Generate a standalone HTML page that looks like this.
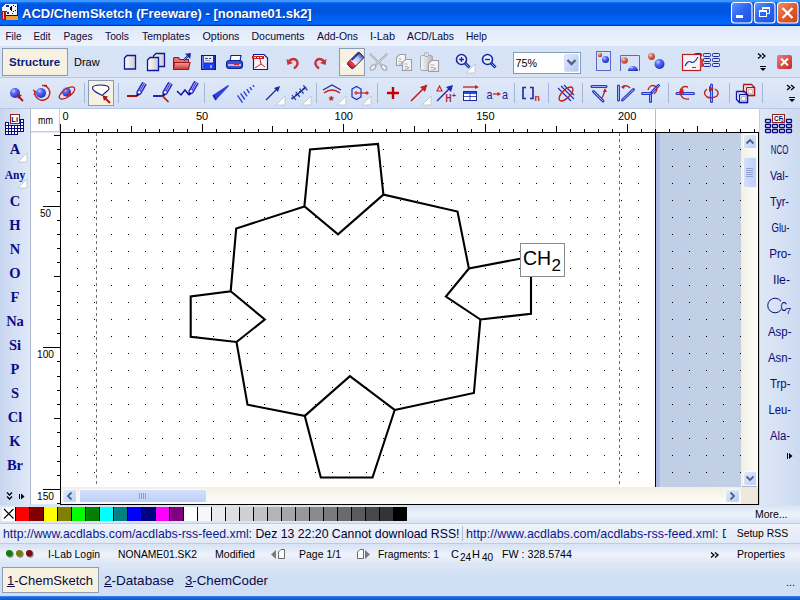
<!DOCTYPE html>
<html><head><meta charset="utf-8"><title>ACD/ChemSketch</title>
<style>html,body{margin:0;padding:0;width:800px;height:600px;overflow:hidden;background:#dfe8f6}</style>
</head><body>
<svg width="800" height="600" viewBox="0 0 800 600" style="position:absolute;left:0;top:0;font-family:'Liberation Sans', sans-serif">
<defs>
<linearGradient id="gTitle" x1="0" y1="0" x2="0" y2="1">
 <stop offset="0" stop-color="#3f97ff"/><stop offset="0.07" stop-color="#3f97ff"/>
 <stop offset="0.1" stop-color="#0a6cf2"/><stop offset="0.16" stop-color="#0058e4"/>
 <stop offset="0.45" stop-color="#0054dc"/><stop offset="0.8" stop-color="#0064fa"/>
 <stop offset="0.93" stop-color="#0066ff"/><stop offset="0.96" stop-color="#0040c4"/>
 <stop offset="1" stop-color="#0036b0"/>
</linearGradient>
<linearGradient id="gMenu" x1="0" y1="0" x2="0" y2="1">
 <stop offset="0" stop-color="#dce7f8"/><stop offset="0.5" stop-color="#e6eefa"/><stop offset="1" stop-color="#eef4fc"/>
</linearGradient>
<linearGradient id="gTb" x1="0" y1="0" x2="0" y2="1">
 <stop offset="0" stop-color="#d7e3f6"/><stop offset="0.5" stop-color="#d6e2f5"/><stop offset="1" stop-color="#d8e3f5"/>
</linearGradient>
<linearGradient id="gTb2" x1="0" y1="0" x2="0" y2="1">
 <stop offset="0" stop-color="#dee8f8"/><stop offset="0.5" stop-color="#d9e4f6"/><stop offset="1" stop-color="#d3dff4"/>
</linearGradient>
<linearGradient id="gLP" x1="0" y1="0" x2="1" y2="0">
 <stop offset="0" stop-color="#c7d6f0"/><stop offset="1" stop-color="#e0e9f8"/>
</linearGradient>
<linearGradient id="gRP" x1="0" y1="0" x2="1" y2="0">
 <stop offset="0" stop-color="#dfe8f7"/><stop offset="1" stop-color="#ccdaf1"/>
</linearGradient>
<linearGradient id="gRow" x1="0" y1="0" x2="0" y2="1">
 <stop offset="0" stop-color="#d6e1f3"/><stop offset="0.5" stop-color="#eef3fb"/><stop offset="1" stop-color="#d9e4f5"/>
</linearGradient>
<linearGradient id="gRss" x1="0" y1="0" x2="0" y2="1">
 <stop offset="0" stop-color="#eef3fb"/><stop offset="1" stop-color="#e2e9f6"/>
</linearGradient>
<linearGradient id="gTabs" x1="0" y1="0" x2="0" y2="1">
 <stop offset="0" stop-color="#dce7f7"/><stop offset="0.3" stop-color="#d2e0f4"/><stop offset="1" stop-color="#d0def3"/>
</linearGradient>
<linearGradient id="gBot" x1="0" y1="0" x2="0" y2="1">
 <stop offset="0" stop-color="#3c8af0"/><stop offset="0.4" stop-color="#1a66dc"/><stop offset="1" stop-color="#0d58d0"/>
</linearGradient>
<linearGradient id="gTrackV" x1="0" y1="0" x2="1" y2="0">
 <stop offset="0" stop-color="#f2f0e4"/><stop offset="1" stop-color="#fdfdf9"/>
</linearGradient>
<linearGradient id="gTrackH" x1="0" y1="0" x2="0" y2="1">
 <stop offset="0" stop-color="#f2f0e4"/><stop offset="1" stop-color="#fdfdf9"/>
</linearGradient>
<linearGradient id="gSbBtn" x1="0" y1="0" x2="1" y2="1">
 <stop offset="0" stop-color="#e4ecfd"/><stop offset="1" stop-color="#b9cdf6"/>
</linearGradient>
<linearGradient id="gThumbH" x1="0" y1="0" x2="0" y2="1">
 <stop offset="0" stop-color="#d3e0fc"/><stop offset="1" stop-color="#bcd0f8"/>
</linearGradient>
<linearGradient id="gThumbV" x1="0" y1="0" x2="1" y2="0">
 <stop offset="0" stop-color="#d3e0fc"/><stop offset="1" stop-color="#bcd0f8"/>
</linearGradient>
<radialGradient id="gBlue" cx="0.35" cy="0.3" r="0.75">
 <stop offset="0" stop-color="#c8d0ff"/><stop offset="0.35" stop-color="#5b6cf5"/><stop offset="1" stop-color="#1a2ac0"/>
</radialGradient>
<radialGradient id="gRed" cx="0.35" cy="0.3" r="0.75">
 <stop offset="0" stop-color="#ffd0c8"/><stop offset="0.4" stop-color="#e07060"/><stop offset="1" stop-color="#b03020"/>
</radialGradient>
<linearGradient id="gDoc" x1="0" y1="0" x2="1" y2="0">
 <stop offset="0" stop-color="#ffffff"/><stop offset="1" stop-color="#c8c8d0"/>
</linearGradient>
<linearGradient id="gFolder" x1="0" y1="0" x2="0" y2="1">
 <stop offset="0" stop-color="#f4a0a0"/><stop offset="1" stop-color="#d03030"/>
</linearGradient>
<linearGradient id="gClose" x1="0" y1="0" x2="1" y2="1">
 <stop offset="0" stop-color="#f07a7a"/><stop offset="1" stop-color="#c02828"/>
</linearGradient>
<linearGradient id="gXPbtn" x1="0" y1="0" x2="1" y2="1">
 <stop offset="0" stop-color="#5e92ff"/><stop offset="0.5" stop-color="#2a64f0"/><stop offset="1" stop-color="#1a54e0"/>
</linearGradient>
<linearGradient id="gXPclose" x1="0" y1="0" x2="1" y2="1">
 <stop offset="0" stop-color="#f0906c"/><stop offset="0.5" stop-color="#e05a30"/><stop offset="1" stop-color="#c84418"/>
</linearGradient>
<linearGradient id="gCombo" x1="0" y1="0" x2="1" y2="1">
 <stop offset="0" stop-color="#dfe8fd"/><stop offset="1" stop-color="#b4c8f4"/>
</linearGradient>
<linearGradient id="gOff" x1="0" y1="0" x2="1" y2="0">
 <stop offset="0" stop-color="#a9b9e2"/><stop offset="0.04" stop-color="#a9b9e2"/><stop offset="0.045" stop-color="#c0cfe5"/><stop offset="1" stop-color="#c2d0e6"/>
</linearGradient>
</defs>
<rect x="0" y="0" width="800" height="26" fill="url(#gTitle)"/><g shape-rendering="crispEdges"><path d="M5 4 L18 4 L18 16 L2 16 L2 7 Z" fill="#f4f6fb"/><rect x="17" y="4" width="1" height="12" fill="#0a1a60"/><rect x="2" y="15" width="16" height="1" fill="#101838"/><rect x="6" y="16" width="12" height="4" fill="#f0a030"/><rect x="2" y="11" width="4" height="9" fill="#b01810"/><rect x="3" y="12" width="1" height="7" fill="#f0c0b0"/><rect x="6" y="5" width="3" height="2" fill="#1a2a9a"/><rect x="13" y="5" width="1" height="1" fill="#000"/><rect x="15" y="6" width="1" height="1" fill="#000"/><rect x="10" y="7" width="2" height="3" fill="#000"/><rect x="11" y="6" width="1" height="1" fill="#000"/><rect x="11" y="10" width="1" height="1" fill="#000"/><rect x="15" y="10" width="1" height="1" fill="#000"/><rect x="13" y="11" width="1" height="1" fill="#000"/><rect x="12" y="13" width="1" height="1" fill="#1a2a9a"/><rect x="7" y="12" width="2" height="2" fill="#1a2a9a"/><rect x="6" y="11" width="1" height="1" fill="#1a2a9a"/></g><text x="23" y="19" font-size="13" font-weight="bold" fill="#0a1e70" opacity="0.6">ACD/ChemSketch (Freeware) - [noname01.sk2]</text><text x="22" y="18" font-size="13" font-weight="bold" fill="#fff">ACD/ChemSketch (Freeware) - [noname01.sk2]</text><rect x="731.5" y="2.5" width="20.5" height="20.5" rx="3" fill="url(#gXPbtn)" stroke="#fff" stroke-width="1.1"/><rect x="754.5" y="2.5" width="20.5" height="20.5" rx="3" fill="url(#gXPbtn)" stroke="#fff" stroke-width="1.1"/><rect x="777.5" y="2.5" width="20.5" height="20.5" rx="3" fill="url(#gXPclose)" stroke="#fff" stroke-width="1.1"/><rect x="736" y="15" width="7" height="3" fill="#fff"/><path d="M762.5 10 L762.5 7.5 L769.5 7.5 L769.5 13.5 L767 13.5" fill="none" stroke="#fff" stroke-width="1"/><rect x="759.5" y="10.5" width="7" height="6" fill="none" stroke="#fff" stroke-width="1"/><rect x="759" y="10" width="8" height="2" fill="#fff"/><rect x="762" y="7" width="8" height="2" fill="#fff"/><path d="M782.5 8 L792.5 18 M792.5 8 L782.5 18" stroke="#fff" stroke-width="2.2"/><rect x="0" y="26" width="800" height="20" fill="url(#gMenu)"/><rect x="0" y="26" width="800" height="1" fill="#d6eafd"/><text x="5.5" y="40" font-size="11" fill="#0a0a40" textLength="16" lengthAdjust="spacingAndGlyphs">File</text><text x="33.5" y="40" font-size="11" fill="#0a0a40" textLength="17" lengthAdjust="spacingAndGlyphs">Edit</text><text x="63.5" y="40" font-size="11" fill="#0a0a40" textLength="29" lengthAdjust="spacingAndGlyphs">Pages</text><text x="105" y="40" font-size="11" fill="#0a0a40" textLength="24" lengthAdjust="spacingAndGlyphs">Tools</text><text x="142" y="40" font-size="11" fill="#0a0a40" textLength="48" lengthAdjust="spacingAndGlyphs">Templates</text><text x="202.5" y="40" font-size="11" fill="#0a0a40" textLength="37" lengthAdjust="spacingAndGlyphs">Options</text><text x="251.5" y="40" font-size="11" fill="#0a0a40" textLength="53" lengthAdjust="spacingAndGlyphs">Documents</text><text x="317" y="40" font-size="11" fill="#0a0a40" textLength="41" lengthAdjust="spacingAndGlyphs">Add-Ons</text><text x="370" y="40" font-size="11" fill="#0a0a40" textLength="25" lengthAdjust="spacingAndGlyphs">I-Lab</text><text x="407" y="40" font-size="11" fill="#0a0a40" textLength="47" lengthAdjust="spacingAndGlyphs">ACD/Labs</text><text x="466" y="40" font-size="11" fill="#0a0a40" textLength="21" lengthAdjust="spacingAndGlyphs">Help</text><rect x="0" y="46" width="800" height="31" fill="url(#gTb)"/><rect x="0" y="77" width="800" height="1" fill="#b8c7e3"/><rect x="0" y="78" width="800" height="30" fill="url(#gTb2)"/><rect x="0" y="108" width="800" height="1" fill="#b8c7e3"/><rect x="2.5" y="48.5" width="65" height="27" fill="#f6f1e0" stroke="#8b9bb4"/><text x="9" y="66" font-size="11.5" font-weight="bold" fill="#0a1e80">Structure</text><text x="74" y="66" font-size="11" fill="#000">Draw</text><path d="M127.0 55.5 L135.5 55.5 L135.5 69.0 L124.5 69.0 L124.5 58.0 Z" fill="url(#gDoc)" stroke="#0a1a9a" stroke-width="1.3"/><path d="M156.0 53.5 L164.5 53.5 L164.5 66.5 L153.5 66.5 L153.5 56.0 Z" fill="url(#gDoc)" stroke="#0a1a9a" stroke-width="1.3"/><path d="M150.0 57.5 L158.5 57.5 L158.5 70.5 L147.5 70.5 L147.5 60.0 Z" fill="url(#gDoc)" stroke="#0a1a9a" stroke-width="1.3"/><path d="M173.5 69.5 L173.5 58.5 Q173.5 57.5 174.5 57.5 L178.5 57.5 L180 59.5 L188.5 59.5 L188.5 69.5 Z" fill="#e87070" stroke="#a01818" stroke-width="1.1"/><path d="M173.5 69.5 L174.5 62.5 L190 62.5 L188.5 69.5 Z" fill="url(#gFolder)" stroke="#a01818" stroke-width="1.1"/><path d="M183.5 60.5 L188.5 55.5" stroke="#1a2a9a" stroke-width="2.2"/><path d="M183.5 60.5 L188.5 55.5" stroke="#8ab0ff" stroke-width="0.8"/><path d="M191 53 L185 53.8 L190.2 59 Z" fill="#1a2a9a"/><rect x="201.5" y="55.5" width="14" height="14" fill="#2030c0" stroke="#0a1890" stroke-width="1"/><rect x="202" y="56" width="1.5" height="13" fill="#5a78f0"/><rect x="204" y="56" width="9" height="6.5" fill="#e8e8f0"/><rect x="205" y="58" width="3" height="1" fill="#404880"/><rect x="209" y="58" width="2" height="1" fill="#404880"/><rect x="205" y="60" width="5" height="1" fill="#9098c0"/><rect x="204.5" y="64" width="9" height="5.5" fill="#1a40ff"/><rect x="210" y="65" width="2" height="3" fill="#8ab0ff"/><path d="M230 61 L231 55.5 L241 55.5 L240 61 Z" fill="#fff" stroke="#0a1e9a" stroke-width="1.1"/><rect x="226.5" y="60.5" width="16" height="8" rx="3" fill="#3a50d8" stroke="#0a1e9a" stroke-width="1.1"/><rect x="228" y="64" width="13" height="2" fill="#b0b8e0"/><rect x="234" y="64" width="5" height="1" fill="#d02020"/><path d="M253.5 54.5 L264 54.5 L267.5 58 L267.5 69.5 L253.5 69.5 Z" fill="#f4f4f8" stroke="#0a1e9a" stroke-width="1.2"/><rect x="252" y="56" width="12" height="3" fill="#c82020"/><rect x="254" y="57" width="2" height="1" fill="#fff"/><rect x="257" y="57" width="2" height="1" fill="#fff"/><rect x="260" y="57" width="2" height="1" fill="#fff"/><path d="M260 59 L261 64 L265 67 M261 64 L255 68" stroke="#c82020" stroke-width="1" fill="none"/><path d="M289 61 Q294 57 297 61 Q299 65 294 68.5" stroke="#c8303a" stroke-width="2.3" fill="none"/><path d="M286.5 59 L287.5 65 L293 63 Z" fill="#c8303a"/><path d="M324 61 Q319 57 316 61 Q314 65 319 68.5" stroke="#c8303a" stroke-width="2.3" fill="none"/><path d="M326.5 59 L325.5 65 L320 63 Z" fill="#c8303a"/><rect x="339.5" y="48.5" width="25" height="27" fill="#f6f1e0" stroke="#8b9bb4"/><rect x="342" y="63" width="10" height="4" fill="#fff"/><defs><linearGradient id="gEr" x1="0" y1="0" x2="1" y2="0"><stop offset="0" stop-color="#c81818"/><stop offset="0.3" stop-color="#e85050"/><stop offset="0.32" stop-color="#f0f0f8"/><stop offset="0.7" stop-color="#c0c8e8"/><stop offset="1" stop-color="#404890"/></linearGradient></defs><g transform="rotate(-45 355.5 60.5)"><rect x="347" y="56.5" width="17" height="8" rx="2" fill="url(#gEr)" stroke="#1a1a80" stroke-width="0.9"/><rect x="353" y="56.5" width="11" height="2" fill="#2a3aa0"/></g><path d="M370.5 54.5 L382 65.5 M386.5 54.5 L375 65.5" stroke="#a0a4ac" stroke-width="2.2" stroke-linecap="round"/><path d="M370.5 54.5 L382 65.5 M386.5 54.5 L375 65.5" stroke="#f0f0f0" stroke-width="0.8"/><ellipse cx="373" cy="67.5" rx="3.2" ry="2" transform="rotate(-40 373 67.5)" fill="#f4f4f4" stroke="#a0a4ac" stroke-width="1.1"/><ellipse cx="384" cy="67.5" rx="3.2" ry="2" transform="rotate(40 384 67.5)" fill="#f4f4f4" stroke="#a0a4ac" stroke-width="1.1"/><path d="M399.5 54.5 L405.5 54.5 L405.5 65.5 L396.5 65.5 L396.5 57.5 Z" fill="#f6f6f6" stroke="#9a9ea6" stroke-width="1.1"/><rect x="398.5" y="58.5" width="3" height="1" fill="#a8acb4"/><rect x="398.5" y="61.0" width="3" height="1" fill="#a8acb4"/><rect x="398.5" y="63.5" width="3" height="1" fill="#a8acb4"/><path d="M400.5 61.5 l3 3 m0 -3 l-3 3" stroke="#a8acb4" stroke-width="0.9"/><path d="M405.5 59.5 L411.5 59.5 L411.5 70.5 L402.5 70.5 L402.5 62.5 Z" fill="#f6f6f6" stroke="#9a9ea6" stroke-width="1.1"/><rect x="404.5" y="63.5" width="3" height="1" fill="#a8acb4"/><rect x="404.5" y="66.0" width="3" height="1" fill="#a8acb4"/><rect x="404.5" y="68.5" width="3" height="1" fill="#a8acb4"/><path d="M406.5 66.5 l3 3 m0 -3 l-3 3" stroke="#a8acb4" stroke-width="0.9"/><defs><linearGradient id="gPaste" x1="0" y1="0" x2="1" y2="0"><stop offset="0" stop-color="#f8f8f8"/><stop offset="1" stop-color="#b8b8b8"/></linearGradient></defs><rect x="420.5" y="55.5" width="12" height="15" rx="2" fill="url(#gPaste)" stroke="#a0a4ac"/><rect x="424.5" y="52.5" width="4" height="4" rx="1" fill="#e0e0e0" stroke="#a0a4ac" stroke-width="0.8"/><path d="M431.5 60.5 L438.5 60.5 L438.5 71.5 L428.5 71.5 L428.5 63.5 Z" fill="#f6f6f6" stroke="#9a9ea6" stroke-width="1.1"/><rect x="430.5" y="64.5" width="4" height="1" fill="#a8acb4"/><rect x="430.5" y="67.0" width="4" height="1" fill="#a8acb4"/><rect x="430.5" y="69.5" width="4" height="1" fill="#a8acb4"/><path d="M433.5 67.5 l3 3 m0 -3 l-3 3" stroke="#a8acb4" stroke-width="0.9"/><circle cx="461.5" cy="59.5" r="5" fill="#e8f0ff" stroke="#1a2aa0" stroke-width="1.6"/><path d="M459 59.5 L464 59.5 M461.5 57 L461.5 62" stroke="#1a2aa0" stroke-width="1.4"/><path d="M465 63 L469.5 67.5" stroke="#1a2aa0" stroke-width="3"/><path d="M465.5 63.5 L469 67" stroke="#7ab0ff" stroke-width="1"/><path d="M466 73 L475 64 L475 73 Z" fill="#fff" stroke="#b8c0cc" stroke-width="0.8"/><circle cx="487.5" cy="59.5" r="5" fill="#e8f0ff" stroke="#1a2aa0" stroke-width="1.6"/><path d="M485 59.5 L490 59.5" stroke="#1a2aa0" stroke-width="1.4"/><path d="M491 63 L495.5 67.5" stroke="#1a2aa0" stroke-width="3"/><path d="M491.5 63.5 L495 67" stroke="#7ab0ff" stroke-width="1"/><rect x="513.5" y="52.5" width="67" height="21" fill="#fff" stroke="#7f9db9"/><text x="515.5" y="66.5" font-size="11.5" fill="#000" textLength="21.5" lengthAdjust="spacingAndGlyphs">75%</text><rect x="564.5" y="54.5" width="14" height="17" rx="1.5" fill="url(#gCombo)" stroke="#c4d4f6" stroke-width="0.6"/><path d="M567.5 60 L571.5 64 L575.5 60" stroke="#4d6185" stroke-width="2.3" fill="none"/><rect x="596.5" y="51.5" width="14" height="19" fill="none" stroke="#5a68c8"/><circle cx="600" cy="55" r="2.2" fill="url(#gRed)"/><circle cx="605.5" cy="59.5" r="3.5" fill="url(#gBlue)"/><path d="M620.5 71 L620.5 55.5 L639.5 55.5 L639.5 71" fill="none" stroke="#5a68c8"/><circle cx="624.5" cy="60.5" r="3.3" fill="url(#gRed)"/><path d="M628 71 A5 5 0 0 1 638 71 Z" fill="url(#gBlue)"/><circle cx="651.5" cy="56.5" r="3.4" fill="url(#gRed)"/><circle cx="659.5" cy="64" r="5" fill="url(#gBlue)"/><rect x="694.5" y="53.5" width="7" height="3" rx="0.8" fill="none" stroke="#1a2aa0" stroke-width="1"/><rect x="703.5" y="53.5" width="7" height="3" rx="0.8" fill="none" stroke="#1a2aa0" stroke-width="1"/><rect x="712.5" y="53.5" width="7" height="3" rx="0.8" fill="none" stroke="#1a2aa0" stroke-width="1"/><rect x="694.5" y="58.5" width="7" height="3" rx="0.8" fill="none" stroke="#1a2aa0" stroke-width="1"/><rect x="703.5" y="58.5" width="7" height="3" rx="0.8" fill="none" stroke="#1a2aa0" stroke-width="1"/><rect x="712.5" y="58.5" width="7" height="3" rx="0.8" fill="none" stroke="#1a2aa0" stroke-width="1"/><rect x="694.5" y="63.5" width="7" height="3" rx="0.8" fill="none" stroke="#1a2aa0" stroke-width="1"/><rect x="703.5" y="63.5" width="7" height="3" rx="0.8" fill="none" stroke="#1a2aa0" stroke-width="1"/><rect x="712.5" y="63.5" width="7" height="3" rx="0.8" fill="none" stroke="#1a2aa0" stroke-width="1"/><rect x="682.5" y="54.5" width="18" height="16" fill="#f4f4fa" stroke="#b82020" stroke-width="1.2"/><rect x="700" y="59" width="3" height="8" fill="#d04040"/><path d="M685 66 Q688 60 691 62 Q694 64 698 57" stroke="#1a2aa0" stroke-width="1.1" fill="none"/><rect x="692" y="67" width="4" height="1" fill="#c02020"/><path d="M758 53.5 L761 56.0 L758 58.5 M762 53.5 L765 56.0 L762 58.5" stroke="#000" stroke-width="1.3" fill="none"/><rect x="760" y="66" width="6" height="1" fill="#000"/><path d="M760 68 L766 68 L763 71 Z" fill="#000"/><rect x="777" y="55" width="15" height="14" rx="2" fill="url(#gClose)"/><path d="M781 58.5 L788 65.5 M788 58.5 L781 65.5" stroke="#fff" stroke-width="2"/><circle cx="15" cy="93" r="5" fill="url(#gBlue)"/><path d="M18 96 L23 101" stroke="#b01818" stroke-width="2"/><path d="M17 94 L22 95 L18 99 Z" fill="#b01818"/><circle cx="41" cy="93" r="5" fill="url(#gBlue)"/><path d="M35 91 A7.5 7.5 0 1 0 44 85.5" stroke="#c02020" stroke-width="1.4" fill="none"/><path d="M42 85.5 L47 85.5" stroke="#c02020" stroke-width="1.4"/><path d="M33 90 L35.5 91.5 L34 95" stroke="#c02020" stroke-width="1.2" fill="none"/><circle cx="66.5" cy="92" r="4.5" fill="url(#gBlue)"/><ellipse cx="67" cy="93" rx="9" ry="4" transform="rotate(-35 67 93)" fill="none" stroke="#c02020" stroke-width="1.3"/><path d="M66 97 L70 91 L72 95 Z" fill="#c02020"/><rect x="84" y="83" width="1" height="20" fill="#a6b6d6"/><rect x="88.5" y="80.5" width="25" height="25" fill="#f6f1e0" stroke="#8b9bb4"/><path d="M102.5 95.5 C97 93 92.5 91 92.5 88 C92.5 85.5 96 85 100.5 85 C105 85 109 86 109 88.5 C109 91 105 91.5 102.5 95.5" stroke="#0a1a90" stroke-width="1.1" fill="#fff"/><path d="M104 97 L110 103" stroke="#b01818" stroke-width="2"/><path d="M102.5 95.5 L108 96.5 L104 101 Z" fill="#b01818"/><rect x="118" y="83" width="1" height="20" fill="#a6b6d6"/><path d="M127 96 L137 96" stroke="#a81010" stroke-width="2"/><path d="M137 96 L140.75 94.14 L146.30 84.63 L142.32 82.31 L136.78 91.82 Z" fill="#2a2ad8" stroke="#0a0a90" stroke-width="0.6"/><path d="M139.33 90.41 L143.62 83.07" stroke="#e8ecff" stroke-width="0.7"/><path d="M140.72 91.22 L145.00 83.88" stroke="#e8ecff" stroke-width="0.7"/><circle cx="139.17" cy="92.28" r="1.3" fill="#fff"/><path d="M137 96 L138.01 94.27" stroke="#0a0a70" stroke-width="1.6"/><path d="M153 96 L162.5 96" stroke="#1010b0" stroke-width="1.8"/><path d="M162.5 96 L168.5 102" stroke="#a81010" stroke-width="1.6"/><path d="M163 96 L166.75 94.14 L172.30 84.63 L168.32 82.31 L162.78 91.82 Z" fill="#2a2ad8" stroke="#0a0a90" stroke-width="0.6"/><path d="M165.33 90.41 L169.62 83.07" stroke="#e8ecff" stroke-width="0.7"/><path d="M166.72 91.22 L171.00 83.88" stroke="#e8ecff" stroke-width="0.7"/><circle cx="165.17" cy="92.28" r="1.3" fill="#fff"/><path d="M163 96 L164.01 94.27" stroke="#0a0a70" stroke-width="1.6"/><path d="M177 91 L181 95 L185 90 L189 95" stroke="#1010b0" stroke-width="1.5" fill="none"/><path d="M189 95 L192.75 93.14 L198.30 83.63 L194.32 81.31 L188.78 90.82 Z" fill="#2a2ad8" stroke="#0a0a90" stroke-width="0.6"/><path d="M191.33 89.41 L195.62 82.07" stroke="#e8ecff" stroke-width="0.7"/><path d="M192.72 90.22 L197.00 82.88" stroke="#e8ecff" stroke-width="0.7"/><circle cx="191.17" cy="91.28" r="1.3" fill="#fff"/><path d="M189 95 L190.01 93.27" stroke="#0a0a70" stroke-width="1.6"/><rect x="204" y="83" width="1" height="20" fill="#a6b6d6"/><path d="M213 95 L228 85 L229 86 L216 100 Z" fill="#3040e0"/><path d="M213 95 L216 100" stroke="#1a20a0" stroke-width="1.5"/><path d="M237.5 95.3 L242.5 102.7" stroke="#3040d8" stroke-width="1.4"/><path d="M240.6 93.3 L244.8 99.5" stroke="#3040d8" stroke-width="1.4"/><path d="M243.7 91.3 L247.1 96.3" stroke="#3040d8" stroke-width="1.4"/><path d="M246.8 89.2 L249.4 93.2" stroke="#3040d8" stroke-width="1.4"/><path d="M249.9 87.2 L251.7 90.0" stroke="#3040d8" stroke-width="1.4"/><path d="M252.9 85.2 L254.1 86.8" stroke="#3040d8" stroke-width="1.4"/><path d="M266 100 L277 89" stroke="#1a2aa0" stroke-width="1.3"/><path d="M280 86 L274 88 L278 92 Z" fill="#1a2aa0"/><path d="M276 105 L285 96 L285 105 Z" fill="#fff" stroke="#b8c0cc" stroke-width="0.8"/><path d="M292 99 L306 87" stroke="#1a2aa0" stroke-width="1.3"/><path d="M292.0 95.0 L296.0 100.0" stroke="#1a2aa0" stroke-width="1.2"/><circle cx="292.2" cy="98.3" r="1" fill="#1a2aa0"/><path d="M295.8 91.8 L299.8 96.8" stroke="#1a2aa0" stroke-width="1.2"/><circle cx="296.0" cy="95.1" r="1" fill="#1a2aa0"/><path d="M299.6 88.6 L303.6 93.6" stroke="#1a2aa0" stroke-width="1.2"/><circle cx="299.8" cy="91.9" r="1" fill="#1a2aa0"/><path d="M303.4 85.4 L307.4 90.4" stroke="#1a2aa0" stroke-width="1.2"/><circle cx="303.6" cy="88.7" r="1" fill="#1a2aa0"/><path d="M302 105 L311 96 L311 105 Z" fill="#fff" stroke="#b8c0cc" stroke-width="0.8"/><rect x="316" y="83" width="1" height="20" fill="#a6b6d6"/><path d="M323 90 L332 85 L341 90" stroke="#1a2aa0" stroke-width="1.2" fill="none"/><path d="M324 93 Q332 87 340 93" stroke="#c02020" stroke-width="1.3" fill="none"/><text x="328.8" y="105" font-size="13" font-weight="bold" fill="#c02020">*</text><path d="M337 105 L346 96 L346 105 Z" fill="#fff" stroke="#b8c0cc" stroke-width="0.8"/><path d="M352 89 L356.5 86.5 L361 89 L361 97 L356.5 99.5 L352 97 Z" fill="none" stroke="#1a2ac0" stroke-width="1.2"/><path d="M356 93 L368 93" stroke="#c02020" stroke-width="1.2"/><circle cx="356" cy="93" r="1.2" fill="none" stroke="#c02020"/><circle cx="367" cy="93" r="1.2" fill="none" stroke="#c02020"/><path d="M362 105 L371 96 L371 105 Z" fill="#fff" stroke="#b8c0cc" stroke-width="0.8"/><rect x="377" y="83" width="1" height="20" fill="#a6b6d6"/><path d="M387 93 L399 93 M393 87 L393 99" stroke="#c00000" stroke-width="2.4"/><path d="M411 101 L424 88" stroke="#c02020" stroke-width="1.6"/><path d="M427.5 84.5 L420 87 L425 92 Z" fill="#c02020"/><path d="M422 105 L431 96 L431 105 Z" fill="#fff" stroke="#b8c0cc" stroke-width="0.8"/><path d="M437 101 L450 88" stroke="#1a2ac0" stroke-width="1.5"/><path d="M453 85 L446 87 L451 92 Z" fill="#1a2ac0"/><path d="M437 91 L439.5 86 L442 91 Z" fill="none" stroke="#c02020" stroke-width="1.1"/><text x="445.5" y="101.5" font-size="10" font-weight="bold" fill="#b01818" textLength="6" lengthAdjust="spacingAndGlyphs">H</text><text x="452" y="97.5" font-size="7" font-weight="bold" fill="#b01818">+</text><path d="M463 87 L477 87" stroke="#c02020" stroke-width="1.3"/><path d="M479 87 L475 85 L475 89 Z" fill="#c02020"/><rect x="463.5" y="91.5" width="13" height="9" fill="#fff" stroke="#1a2aa0"/><rect x="464" y="92" width="12" height="2" fill="#2050e0"/><path d="M464 96.5 L476 96.5 M470 94 L470 100" stroke="#1a2aa0" stroke-width="0.8"/><text x="486.5" y="98.5" font-size="13" fill="#1a1aa0" textLength="6" lengthAdjust="spacingAndGlyphs">a</text><text x="502" y="98.5" font-size="13" fill="#1a1aa0" textLength="6" lengthAdjust="spacingAndGlyphs">a</text><path d="M493 94 L499 94" stroke="#c02020" stroke-width="1.3"/><path d="M501 94 L497.5 92 L497.5 96 Z" fill="#c02020"/><rect x="514" y="83" width="1" height="20" fill="#a6b6d6"/><path d="M526 87.5 L523 87.5 L523 98.5 L526 98.5 M530 87.5 L533 87.5 L533 98.5 L530 98.5" stroke="#1a2aa0" stroke-width="1.6" fill="none"/><text x="534.5" y="100.5" font-size="9" font-family="'Liberation Mono',monospace" font-weight="bold" fill="#c02020">n</text><rect x="548" y="83" width="1" height="20" fill="#a6b6d6"/><path d="M558 88 L571 101 M561 86 L574 99 M564 85 L574 95" stroke="#1a2ac0" stroke-width="1.1"/><ellipse cx="566" cy="94" rx="9" ry="4" transform="rotate(-45 566 94)" fill="none" stroke="#c02020" stroke-width="1.4"/><rect x="582" y="83" width="1" height="20" fill="#a6b6d6"/><path d="M592 86.5 L606 86.5" stroke="#2a3ad0" stroke-width="3" stroke-linecap="round"/><path d="M592 86.5 L606 86.5" stroke="#b0c0ff" stroke-width="0.9"/><path d="M593.5 91.5 L603 101" stroke="#2a3ad0" stroke-width="3" stroke-linecap="round"/><path d="M593.5 91.5 L603 101" stroke="#b0c0ff" stroke-width="0.9"/><path d="M602 98 Q604 94 605 90" stroke="#c02020" stroke-width="1.3" fill="none"/><path d="M605 88 L603 92 L607 92 Z" fill="#c02020"/><path d="M618.5 86 L618.5 100" stroke="#2a3ad0" stroke-width="3" stroke-linecap="round"/><path d="M618.5 86 L618.5 100" stroke="#b0c0ff" stroke-width="0.9"/><path d="M622.5 100 L633.5 89.5" stroke="#2a3ad0" stroke-width="3" stroke-linecap="round"/><path d="M622.5 100 L633.5 89.5" stroke="#b0c0ff" stroke-width="0.9"/><path d="M622 87 Q627 84 630 88" stroke="#c02020" stroke-width="1.3" fill="none"/><path d="M621 87 L625 85 L624 89 Z" fill="#c02020"/><path d="M642.5 93.5 L651 93.5" stroke="#2a3ad0" stroke-width="3" stroke-linecap="round"/><path d="M642.5 93.5 L651 93.5" stroke="#b0c0ff" stroke-width="0.9"/><path d="M650.5 95 L650.5 101.5" stroke="#2a3ad0" stroke-width="3" stroke-linecap="round"/><path d="M650.5 95 L650.5 101.5" stroke="#b0c0ff" stroke-width="0.9"/><path d="M652 92 L658.5 85.5" stroke="#2a3ad0" stroke-width="3" stroke-linecap="round"/><path d="M652 92 L658.5 85.5" stroke="#b0c0ff" stroke-width="0.9"/><path d="M648 90 Q650 84 655 86 Q659 90 654 94" stroke="#c02020" stroke-width="1.4" fill="none"/><rect x="668" y="83" width="1" height="20" fill="#a6b6d6"/><path d="M677 93.5 L693.5 93.5" stroke="#2a3ad0" stroke-width="3" stroke-linecap="round"/><path d="M677 93.5 L693.5 93.5" stroke="#b0c0ff" stroke-width="0.9"/><path d="M688 87 Q681 85 680 92 Q681 100 689 99" stroke="#c02020" stroke-width="1.4" fill="none"/><path d="M678 93 L683 88 L684 94 Z" fill="#c02020"/><path d="M711.5 85 L711.5 101.5" stroke="#2a3ad0" stroke-width="3" stroke-linecap="round"/><path d="M711.5 85 L711.5 101.5" stroke="#b0c0ff" stroke-width="0.9"/><path d="M707 89 Q702 93 707 97 Q712 99 717 96 Q720 92 715 89" stroke="#c02020" stroke-width="1.4" fill="none"/><path d="M714 89 L709 86 L709 92 Z" fill="#c02020"/><rect x="729" y="83" width="1" height="20" fill="#a6b6d6"/><path d="M743.5 84.5 L751.5 84.5 L754.5 87.5 L754.5 95.5 L746.5 95.5 L743.5 92.5 Z" fill="#fff" fill-opacity="0.6" stroke="#a01818" stroke-width="1.3"/><rect x="746.5" y="87.5" width="8" height="8" fill="none" stroke="#a01818" stroke-width="1.2"/><path d="M743.5 84.5 L746.5 87.5 M748.5 89.5 h4 v4 h-4 z" stroke="#e0a0a0" stroke-width="0.8" fill="none"/><path d="M736.5 91.5 L744.5 91.5 L747.5 94.5 L747.5 102.5 L739.5 102.5 L736.5 99.5 Z" fill="#fff" fill-opacity="0.6" stroke="#1010a8" stroke-width="1.3"/><rect x="739.5" y="94.5" width="8" height="8" fill="none" stroke="#1010a8" stroke-width="1.2"/><path d="M736.5 91.5 L739.5 94.5 M741.5 96.5 h4 v4 h-4 z" stroke="#a0a0e0" stroke-width="0.8" fill="none"/><rect x="762" y="83" width="1" height="20" fill="#a6b6d6"/><path d="M787 85 L790 87.5 L787 90 M791 85 L794 87.5 L791 90" stroke="#000" stroke-width="1.3" fill="none"/><rect x="789" y="97" width="6" height="1" fill="#000"/><path d="M789 99 L795 99 L792 102 Z" fill="#000"/><rect x="0" y="109" width="30" height="397" fill="url(#gLP)"/><rect x="30" y="109" width="1" height="397" fill="#abb8cf"/><rect x="759" y="109" width="41" height="397" fill="url(#gRP)"/><rect x="759" y="109" width="1" height="397" fill="#c0cfe8"/><g shape-rendering="crispEdges"><rect x="20" y="119" width="4" height="4" fill="#0a0a80"/><rect x="20" y="122" width="4" height="4" fill="#0a0a80"/><rect x="20" y="125" width="4" height="4" fill="#0a0a80"/><rect x="20" y="128" width="4" height="4" fill="#0a0a80"/><rect x="5" y="122" width="4" height="4" fill="#0a0a80"/><rect x="5" y="125" width="4" height="4" fill="#0a0a80"/><rect x="5" y="128" width="4" height="4" fill="#0a0a80"/><rect x="5" y="131" width="4" height="4" fill="#0a0a80"/><rect x="8" y="125" width="4" height="4" fill="#0a0a80"/><rect x="11" y="125" width="4" height="4" fill="#0a0a80"/><rect x="14" y="125" width="4" height="4" fill="#0a0a80"/><rect x="17" y="125" width="4" height="4" fill="#0a0a80"/><rect x="8" y="128" width="4" height="4" fill="#0a0a80"/><rect x="11" y="128" width="4" height="4" fill="#0a0a80"/><rect x="14" y="128" width="4" height="4" fill="#0a0a80"/><rect x="17" y="128" width="4" height="4" fill="#0a0a80"/><rect x="8" y="131" width="4" height="4" fill="#0a0a80"/><rect x="11" y="131" width="4" height="4" fill="#0a0a80"/><rect x="14" y="131" width="4" height="4" fill="#0a0a80"/><rect x="21" y="120" width="2" height="2" fill="#fff"/><rect x="21" y="123" width="2" height="2" fill="#fff"/><rect x="21" y="126" width="2" height="2" fill="#fff"/><rect x="21" y="129" width="2" height="2" fill="#fff"/><rect x="6" y="123" width="2" height="2" fill="#fff"/><rect x="6" y="126" width="2" height="2" fill="#fff"/><rect x="6" y="129" width="2" height="2" fill="#fff"/><rect x="6" y="132" width="2" height="2" fill="#fff"/><rect x="9" y="126" width="2" height="2" fill="#fff"/><rect x="12" y="126" width="2" height="2" fill="#fff"/><rect x="15" y="126" width="2" height="2" fill="#fff"/><rect x="18" y="126" width="2" height="2" fill="#fff"/><rect x="9" y="129" width="2" height="2" fill="#fff"/><rect x="12" y="129" width="2" height="2" fill="#fff"/><rect x="15" y="129" width="2" height="2" fill="#fff"/><rect x="18" y="129" width="2" height="2" fill="#fff"/><rect x="9" y="132" width="2" height="2" fill="#fff"/><rect x="12" y="132" width="2" height="2" fill="#fff"/><rect x="15" y="132" width="2" height="2" fill="#fff"/></g><rect x="10.5" y="114.5" width="9" height="9" fill="#fff" stroke="#902020" stroke-width="1"/><text x="11.3" y="121.6" font-size="7.5" font-weight="bold" fill="#0a0a50">Li</text><text x="15" y="154" font-size="14.5" font-family="'Liberation Serif',serif" font-weight="bold" fill="#0c0c88" text-anchor="middle">A</text><text x="15" y="179" font-size="11.5" font-family="'Liberation Serif',serif" font-weight="bold" fill="#0c0c88" text-anchor="middle">Any</text><text x="15" y="206" font-size="14.5" font-family="'Liberation Serif',serif" font-weight="bold" fill="#0c0c88" text-anchor="middle">C</text><text x="15" y="230" font-size="14.5" font-family="'Liberation Serif',serif" font-weight="bold" fill="#0c0c88" text-anchor="middle">H</text><text x="15" y="254" font-size="14.5" font-family="'Liberation Serif',serif" font-weight="bold" fill="#0c0c88" text-anchor="middle">N</text><text x="15" y="278" font-size="14.5" font-family="'Liberation Serif',serif" font-weight="bold" fill="#0c0c88" text-anchor="middle">O</text><text x="15" y="302" font-size="14.5" font-family="'Liberation Serif',serif" font-weight="bold" fill="#0c0c88" text-anchor="middle">F</text><text x="15" y="326" font-size="14.5" font-family="'Liberation Serif',serif" font-weight="bold" fill="#0c0c88" text-anchor="middle">Na</text><text x="15" y="350" font-size="14.5" font-family="'Liberation Serif',serif" font-weight="bold" fill="#0c0c88" text-anchor="middle">Si</text><text x="15" y="374" font-size="14.5" font-family="'Liberation Serif',serif" font-weight="bold" fill="#0c0c88" text-anchor="middle">P</text><text x="15" y="398" font-size="14.5" font-family="'Liberation Serif',serif" font-weight="bold" fill="#0c0c88" text-anchor="middle">S</text><text x="15" y="422" font-size="14.5" font-family="'Liberation Serif',serif" font-weight="bold" fill="#0c0c88" text-anchor="middle">Cl</text><text x="15" y="446" font-size="14.5" font-family="'Liberation Serif',serif" font-weight="bold" fill="#0c0c88" text-anchor="middle">K</text><text x="15" y="470" font-size="14.5" font-family="'Liberation Serif',serif" font-weight="bold" fill="#0c0c88" text-anchor="middle">Br</text><path d="M18 162 L27 153 L27 162 Z" fill="#fff" stroke="#b8c0cc" stroke-width="0.8"/><path d="M18 188 L27 179 L27 188 Z" fill="#fff" stroke="#b8c0cc" stroke-width="0.8"/><path d="M7 492.5 L9.5 495 L12 492.5 M7 496.5 L9.5 499 L12 496.5" stroke="#000" stroke-width="1.3" fill="none"/><rect x="19" y="494" width="1" height="5" fill="#000"/><path d="M21 493.5 L24.5 496.5 L21 499.5 Z" fill="#000"/><rect x="765.5" y="119.5" width="5" height="3" rx="0.5" fill="#fff" stroke="#0a0a80" stroke-width="1.3"/><rect x="786.5" y="119.5" width="5" height="3" rx="0.5" fill="#fff" stroke="#0a0a80" stroke-width="1.3"/><rect x="765.5" y="124.5" width="5" height="3" rx="0.5" fill="#fff" stroke="#0a0a80" stroke-width="1.3"/><rect x="772.5" y="124.5" width="5" height="3" rx="0.5" fill="#fff" stroke="#0a0a80" stroke-width="1.3"/><rect x="779.5" y="124.5" width="5" height="3" rx="0.5" fill="#fff" stroke="#0a0a80" stroke-width="1.3"/><rect x="786.5" y="124.5" width="5" height="3" rx="0.5" fill="#fff" stroke="#0a0a80" stroke-width="1.3"/><rect x="765.5" y="129.5" width="5" height="3" rx="0.5" fill="#fff" stroke="#0a0a80" stroke-width="1.3"/><rect x="772.5" y="129.5" width="5" height="3" rx="0.5" fill="#fff" stroke="#0a0a80" stroke-width="1.3"/><rect x="779.5" y="129.5" width="5" height="3" rx="0.5" fill="#fff" stroke="#0a0a80" stroke-width="1.3"/><rect x="786.5" y="129.5" width="5" height="3" rx="0.5" fill="#fff" stroke="#0a0a80" stroke-width="1.3"/><rect x="772.5" y="114.5" width="12" height="8" fill="#fff" stroke="#902020" stroke-width="1"/><text x="774" y="121" font-size="6.5" font-weight="bold" fill="#0a0a50">CF</text><text x="781" y="121.5" font-size="4.5" font-weight="bold" fill="#0a0a50">3</text><text x="770.8" y="154" font-size="12.5" fill="#0a0a70" textLength="17.5" lengthAdjust="spacingAndGlyphs">NCO</text><text x="770" y="180" font-size="12.5" fill="#0a0a70" textLength="18.3" lengthAdjust="spacingAndGlyphs">Val-</text><text x="770" y="206" font-size="12.5" fill="#0a0a70" textLength="19" lengthAdjust="spacingAndGlyphs">Tyr-</text><text x="771.5" y="232" font-size="12.5" fill="#0a0a70" textLength="18" lengthAdjust="spacingAndGlyphs">Glu-</text><text x="769.2" y="258" font-size="12.5" fill="#0a0a70" textLength="22" lengthAdjust="spacingAndGlyphs">Pro-</text><text x="773" y="284" font-size="12.5" fill="#0a0a70" textLength="17" lengthAdjust="spacingAndGlyphs">Ile-</text><text x="768" y="336" font-size="12.5" fill="#0a0a70" textLength="23.5" lengthAdjust="spacingAndGlyphs">Asp-</text><text x="768" y="362" font-size="12.5" fill="#0a0a70" textLength="23.5" lengthAdjust="spacingAndGlyphs">Asn-</text><text x="770" y="388" font-size="12.5" fill="#0a0a70" textLength="20.5" lengthAdjust="spacingAndGlyphs">Trp-</text><text x="768.5" y="414" font-size="12.5" fill="#0a0a70" textLength="22.5" lengthAdjust="spacingAndGlyphs">Leu-</text><text x="770" y="440" font-size="12.5" fill="#0a0a70" textLength="20" lengthAdjust="spacingAndGlyphs">Ala-</text><path d="M781 301.3 A7.3 7.3 0 1 0 781 309.7" fill="none" stroke="#0a0a70" stroke-width="1"/><text x="780.5" y="310.5" font-size="12" fill="#0a0a70" textLength="6.5" lengthAdjust="spacingAndGlyphs">C</text><text x="786" y="313.5" font-size="9" fill="#0a0a70">7</text><rect x="787" y="453" width="1" height="6" fill="#000"/><path d="M789 453 L792.5 456 L789 459 Z" fill="#000"/><rect x="31" y="109" width="728" height="23" fill="#fff"/><rect x="31" y="131" width="29" height="1" fill="#c4cfe2"/><rect x="59" y="109" width="1" height="22" fill="#c4cfe2"/><text x="38" y="124" font-size="11.8" fill="#000" textLength="15" lengthAdjust="spacingAndGlyphs">mm</text><rect x="655" y="109" width="1" height="20" fill="#b0bcd8"/><g shape-rendering="crispEdges"><rect x="60" y="124" width="1" height="8" fill="#000"/><rect x="74" y="129" width="1" height="3" fill="#000"/><rect x="88" y="129" width="1" height="3" fill="#000"/><rect x="102" y="129" width="1" height="3" fill="#000"/><rect x="117" y="129" width="1" height="3" fill="#000"/><rect x="131" y="126" width="1" height="6" fill="#000"/><rect x="145" y="129" width="1" height="3" fill="#000"/><rect x="159" y="129" width="1" height="3" fill="#000"/><rect x="173" y="129" width="1" height="3" fill="#000"/><rect x="187" y="129" width="1" height="3" fill="#000"/><rect x="202" y="124" width="1" height="8" fill="#000"/><rect x="216" y="129" width="1" height="3" fill="#000"/><rect x="230" y="129" width="1" height="3" fill="#000"/><rect x="244" y="129" width="1" height="3" fill="#000"/><rect x="258" y="129" width="1" height="3" fill="#000"/><rect x="272" y="126" width="1" height="6" fill="#000"/><rect x="287" y="129" width="1" height="3" fill="#000"/><rect x="301" y="129" width="1" height="3" fill="#000"/><rect x="315" y="129" width="1" height="3" fill="#000"/><rect x="329" y="129" width="1" height="3" fill="#000"/><rect x="343" y="124" width="1" height="8" fill="#000"/><rect x="357" y="129" width="1" height="3" fill="#000"/><rect x="372" y="129" width="1" height="3" fill="#000"/><rect x="386" y="129" width="1" height="3" fill="#000"/><rect x="400" y="129" width="1" height="3" fill="#000"/><rect x="414" y="126" width="1" height="6" fill="#000"/><rect x="428" y="129" width="1" height="3" fill="#000"/><rect x="442" y="129" width="1" height="3" fill="#000"/><rect x="457" y="129" width="1" height="3" fill="#000"/><rect x="471" y="129" width="1" height="3" fill="#000"/><rect x="485" y="124" width="1" height="8" fill="#000"/><rect x="499" y="129" width="1" height="3" fill="#000"/><rect x="513" y="129" width="1" height="3" fill="#000"/><rect x="527" y="129" width="1" height="3" fill="#000"/><rect x="542" y="129" width="1" height="3" fill="#000"/><rect x="556" y="126" width="1" height="6" fill="#000"/><rect x="570" y="129" width="1" height="3" fill="#000"/><rect x="584" y="129" width="1" height="3" fill="#000"/><rect x="598" y="129" width="1" height="3" fill="#000"/><rect x="612" y="129" width="1" height="3" fill="#000"/><rect x="627" y="124" width="1" height="8" fill="#000"/><rect x="641" y="129" width="1" height="3" fill="#000"/><rect x="655" y="129" width="1" height="3" fill="#000"/><rect x="669" y="129" width="1" height="3" fill="#000"/><rect x="683" y="129" width="1" height="3" fill="#000"/><rect x="697" y="126" width="1" height="6" fill="#000"/><rect x="712" y="129" width="1" height="3" fill="#000"/><rect x="726" y="129" width="1" height="3" fill="#000"/><rect x="740" y="129" width="1" height="3" fill="#000"/><rect x="754" y="129" width="1" height="3" fill="#000"/></g><rect x="60" y="132" width="698" height="1" fill="#000"/><text x="62.5" y="120" font-size="11" fill="#000">0</text><text x="202.1" y="120" font-size="11" fill="#000" text-anchor="middle">50</text><text x="343.8" y="120" font-size="11" fill="#000" text-anchor="middle">100</text><text x="485.4" y="120" font-size="11" fill="#000" text-anchor="middle">150</text><text x="627.1" y="120" font-size="11" fill="#000" text-anchor="middle">200</text><rect x="31" y="133" width="29" height="371" fill="#fff"/><rect x="61" y="133" width="594" height="355" fill="#fff"/><rect x="656" y="133" width="85" height="355" fill="url(#gOff)"/><g shape-rendering="crispEdges"><rect x="54" y="135" width="6" height="1" fill="#000"/><rect x="57" y="149" width="3" height="1" fill="#000"/><rect x="57" y="163" width="3" height="1" fill="#000"/><rect x="57" y="177" width="3" height="1" fill="#000"/><rect x="57" y="191" width="3" height="1" fill="#000"/><rect x="43" y="206" width="17" height="1" fill="#000"/><rect x="57" y="220" width="3" height="1" fill="#000"/><rect x="57" y="234" width="3" height="1" fill="#000"/><rect x="57" y="248" width="3" height="1" fill="#000"/><rect x="57" y="262" width="3" height="1" fill="#000"/><rect x="54" y="276" width="6" height="1" fill="#000"/><rect x="57" y="291" width="3" height="1" fill="#000"/><rect x="57" y="305" width="3" height="1" fill="#000"/><rect x="57" y="319" width="3" height="1" fill="#000"/><rect x="57" y="333" width="3" height="1" fill="#000"/><rect x="43" y="347" width="17" height="1" fill="#000"/><rect x="57" y="361" width="3" height="1" fill="#000"/><rect x="57" y="376" width="3" height="1" fill="#000"/><rect x="57" y="390" width="3" height="1" fill="#000"/><rect x="57" y="404" width="3" height="1" fill="#000"/><rect x="54" y="418" width="6" height="1" fill="#000"/><rect x="57" y="432" width="3" height="1" fill="#000"/><rect x="57" y="446" width="3" height="1" fill="#000"/><rect x="57" y="461" width="3" height="1" fill="#000"/><rect x="57" y="475" width="3" height="1" fill="#000"/><rect x="43" y="489" width="17" height="1" fill="#000"/><rect x="57" y="503" width="3" height="1" fill="#000"/></g><rect x="60" y="124" width="1" height="381" fill="#000"/><text x="40" y="217" font-size="11" fill="#000" textLength="11" lengthAdjust="spacingAndGlyphs">50</text><text x="37" y="358" font-size="11" fill="#000" textLength="17" lengthAdjust="spacingAndGlyphs">100</text><text x="37" y="500" font-size="11" fill="#000" textLength="17" lengthAdjust="spacingAndGlyphs">150</text><path d="M77 149h1v1h-1zM77 166h1v1h-1zM77 183h1v1h-1zM77 200h1v1h-1zM77 217h1v1h-1zM77 234h1v1h-1zM77 251h1v1h-1zM77 268h1v1h-1zM77 285h1v1h-1zM77 302h1v1h-1zM77 319h1v1h-1zM77 336h1v1h-1zM77 353h1v1h-1zM77 370h1v1h-1zM77 387h1v1h-1zM77 404h1v1h-1zM77 421h1v1h-1zM77 438h1v1h-1zM77 455h1v1h-1zM77 472h1v1h-1zM94 149h1v1h-1zM94 166h1v1h-1zM94 183h1v1h-1zM94 200h1v1h-1zM94 217h1v1h-1zM94 234h1v1h-1zM94 251h1v1h-1zM94 268h1v1h-1zM94 285h1v1h-1zM94 302h1v1h-1zM94 319h1v1h-1zM94 336h1v1h-1zM94 353h1v1h-1zM94 370h1v1h-1zM94 387h1v1h-1zM94 404h1v1h-1zM94 421h1v1h-1zM94 438h1v1h-1zM94 455h1v1h-1zM94 472h1v1h-1zM111 149h1v1h-1zM111 166h1v1h-1zM111 183h1v1h-1zM111 200h1v1h-1zM111 217h1v1h-1zM111 234h1v1h-1zM111 251h1v1h-1zM111 268h1v1h-1zM111 285h1v1h-1zM111 302h1v1h-1zM111 319h1v1h-1zM111 336h1v1h-1zM111 353h1v1h-1zM111 370h1v1h-1zM111 387h1v1h-1zM111 404h1v1h-1zM111 421h1v1h-1zM111 438h1v1h-1zM111 455h1v1h-1zM111 472h1v1h-1zM128 149h1v1h-1zM128 166h1v1h-1zM128 183h1v1h-1zM128 200h1v1h-1zM128 217h1v1h-1zM128 234h1v1h-1zM128 251h1v1h-1zM128 268h1v1h-1zM128 285h1v1h-1zM128 302h1v1h-1zM128 319h1v1h-1zM128 336h1v1h-1zM128 353h1v1h-1zM128 370h1v1h-1zM128 387h1v1h-1zM128 404h1v1h-1zM128 421h1v1h-1zM128 438h1v1h-1zM128 455h1v1h-1zM128 472h1v1h-1zM145 149h1v1h-1zM145 166h1v1h-1zM145 183h1v1h-1zM145 200h1v1h-1zM145 217h1v1h-1zM145 234h1v1h-1zM145 251h1v1h-1zM145 268h1v1h-1zM145 285h1v1h-1zM145 302h1v1h-1zM145 319h1v1h-1zM145 336h1v1h-1zM145 353h1v1h-1zM145 370h1v1h-1zM145 387h1v1h-1zM145 404h1v1h-1zM145 421h1v1h-1zM145 438h1v1h-1zM145 455h1v1h-1zM145 472h1v1h-1zM162 149h1v1h-1zM162 166h1v1h-1zM162 183h1v1h-1zM162 200h1v1h-1zM162 217h1v1h-1zM162 234h1v1h-1zM162 251h1v1h-1zM162 268h1v1h-1zM162 285h1v1h-1zM162 302h1v1h-1zM162 319h1v1h-1zM162 336h1v1h-1zM162 353h1v1h-1zM162 370h1v1h-1zM162 387h1v1h-1zM162 404h1v1h-1zM162 421h1v1h-1zM162 438h1v1h-1zM162 455h1v1h-1zM162 472h1v1h-1zM179 149h1v1h-1zM179 166h1v1h-1zM179 183h1v1h-1zM179 200h1v1h-1zM179 217h1v1h-1zM179 234h1v1h-1zM179 251h1v1h-1zM179 268h1v1h-1zM179 285h1v1h-1zM179 302h1v1h-1zM179 319h1v1h-1zM179 336h1v1h-1zM179 353h1v1h-1zM179 370h1v1h-1zM179 387h1v1h-1zM179 404h1v1h-1zM179 421h1v1h-1zM179 438h1v1h-1zM179 455h1v1h-1zM179 472h1v1h-1zM196 149h1v1h-1zM196 166h1v1h-1zM196 183h1v1h-1zM196 200h1v1h-1zM196 217h1v1h-1zM196 234h1v1h-1zM196 251h1v1h-1zM196 268h1v1h-1zM196 285h1v1h-1zM196 302h1v1h-1zM196 319h1v1h-1zM196 336h1v1h-1zM196 353h1v1h-1zM196 370h1v1h-1zM196 387h1v1h-1zM196 404h1v1h-1zM196 421h1v1h-1zM196 438h1v1h-1zM196 455h1v1h-1zM196 472h1v1h-1zM213 149h1v1h-1zM213 166h1v1h-1zM213 183h1v1h-1zM213 200h1v1h-1zM213 217h1v1h-1zM213 234h1v1h-1zM213 251h1v1h-1zM213 268h1v1h-1zM213 285h1v1h-1zM213 302h1v1h-1zM213 319h1v1h-1zM213 336h1v1h-1zM213 353h1v1h-1zM213 370h1v1h-1zM213 387h1v1h-1zM213 404h1v1h-1zM213 421h1v1h-1zM213 438h1v1h-1zM213 455h1v1h-1zM213 472h1v1h-1zM230 149h1v1h-1zM230 166h1v1h-1zM230 183h1v1h-1zM230 200h1v1h-1zM230 217h1v1h-1zM230 234h1v1h-1zM230 251h1v1h-1zM230 268h1v1h-1zM230 285h1v1h-1zM230 302h1v1h-1zM230 319h1v1h-1zM230 336h1v1h-1zM230 353h1v1h-1zM230 370h1v1h-1zM230 387h1v1h-1zM230 404h1v1h-1zM230 421h1v1h-1zM230 438h1v1h-1zM230 455h1v1h-1zM230 472h1v1h-1zM247 149h1v1h-1zM247 166h1v1h-1zM247 183h1v1h-1zM247 200h1v1h-1zM247 217h1v1h-1zM247 234h1v1h-1zM247 251h1v1h-1zM247 268h1v1h-1zM247 285h1v1h-1zM247 302h1v1h-1zM247 319h1v1h-1zM247 336h1v1h-1zM247 353h1v1h-1zM247 370h1v1h-1zM247 387h1v1h-1zM247 404h1v1h-1zM247 421h1v1h-1zM247 438h1v1h-1zM247 455h1v1h-1zM247 472h1v1h-1zM264 149h1v1h-1zM264 166h1v1h-1zM264 183h1v1h-1zM264 200h1v1h-1zM264 217h1v1h-1zM264 234h1v1h-1zM264 251h1v1h-1zM264 268h1v1h-1zM264 285h1v1h-1zM264 302h1v1h-1zM264 319h1v1h-1zM264 336h1v1h-1zM264 353h1v1h-1zM264 370h1v1h-1zM264 387h1v1h-1zM264 404h1v1h-1zM264 421h1v1h-1zM264 438h1v1h-1zM264 455h1v1h-1zM264 472h1v1h-1zM281 149h1v1h-1zM281 166h1v1h-1zM281 183h1v1h-1zM281 200h1v1h-1zM281 217h1v1h-1zM281 234h1v1h-1zM281 251h1v1h-1zM281 268h1v1h-1zM281 285h1v1h-1zM281 302h1v1h-1zM281 319h1v1h-1zM281 336h1v1h-1zM281 353h1v1h-1zM281 370h1v1h-1zM281 387h1v1h-1zM281 404h1v1h-1zM281 421h1v1h-1zM281 438h1v1h-1zM281 455h1v1h-1zM281 472h1v1h-1zM298 149h1v1h-1zM298 166h1v1h-1zM298 183h1v1h-1zM298 200h1v1h-1zM298 217h1v1h-1zM298 234h1v1h-1zM298 251h1v1h-1zM298 268h1v1h-1zM298 285h1v1h-1zM298 302h1v1h-1zM298 319h1v1h-1zM298 336h1v1h-1zM298 353h1v1h-1zM298 370h1v1h-1zM298 387h1v1h-1zM298 404h1v1h-1zM298 421h1v1h-1zM298 438h1v1h-1zM298 455h1v1h-1zM298 472h1v1h-1zM315 149h1v1h-1zM315 166h1v1h-1zM315 183h1v1h-1zM315 200h1v1h-1zM315 217h1v1h-1zM315 234h1v1h-1zM315 251h1v1h-1zM315 268h1v1h-1zM315 285h1v1h-1zM315 302h1v1h-1zM315 319h1v1h-1zM315 336h1v1h-1zM315 353h1v1h-1zM315 370h1v1h-1zM315 387h1v1h-1zM315 404h1v1h-1zM315 421h1v1h-1zM315 438h1v1h-1zM315 455h1v1h-1zM315 472h1v1h-1zM332 149h1v1h-1zM332 166h1v1h-1zM332 183h1v1h-1zM332 200h1v1h-1zM332 217h1v1h-1zM332 234h1v1h-1zM332 251h1v1h-1zM332 268h1v1h-1zM332 285h1v1h-1zM332 302h1v1h-1zM332 319h1v1h-1zM332 336h1v1h-1zM332 353h1v1h-1zM332 370h1v1h-1zM332 387h1v1h-1zM332 404h1v1h-1zM332 421h1v1h-1zM332 438h1v1h-1zM332 455h1v1h-1zM332 472h1v1h-1zM349 149h1v1h-1zM349 166h1v1h-1zM349 183h1v1h-1zM349 200h1v1h-1zM349 217h1v1h-1zM349 234h1v1h-1zM349 251h1v1h-1zM349 268h1v1h-1zM349 285h1v1h-1zM349 302h1v1h-1zM349 319h1v1h-1zM349 336h1v1h-1zM349 353h1v1h-1zM349 370h1v1h-1zM349 387h1v1h-1zM349 404h1v1h-1zM349 421h1v1h-1zM349 438h1v1h-1zM349 455h1v1h-1zM349 472h1v1h-1zM366 149h1v1h-1zM366 166h1v1h-1zM366 183h1v1h-1zM366 200h1v1h-1zM366 217h1v1h-1zM366 234h1v1h-1zM366 251h1v1h-1zM366 268h1v1h-1zM366 285h1v1h-1zM366 302h1v1h-1zM366 319h1v1h-1zM366 336h1v1h-1zM366 353h1v1h-1zM366 370h1v1h-1zM366 387h1v1h-1zM366 404h1v1h-1zM366 421h1v1h-1zM366 438h1v1h-1zM366 455h1v1h-1zM366 472h1v1h-1zM383 149h1v1h-1zM383 166h1v1h-1zM383 183h1v1h-1zM383 200h1v1h-1zM383 217h1v1h-1zM383 234h1v1h-1zM383 251h1v1h-1zM383 268h1v1h-1zM383 285h1v1h-1zM383 302h1v1h-1zM383 319h1v1h-1zM383 336h1v1h-1zM383 353h1v1h-1zM383 370h1v1h-1zM383 387h1v1h-1zM383 404h1v1h-1zM383 421h1v1h-1zM383 438h1v1h-1zM383 455h1v1h-1zM383 472h1v1h-1zM400 149h1v1h-1zM400 166h1v1h-1zM400 183h1v1h-1zM400 200h1v1h-1zM400 217h1v1h-1zM400 234h1v1h-1zM400 251h1v1h-1zM400 268h1v1h-1zM400 285h1v1h-1zM400 302h1v1h-1zM400 319h1v1h-1zM400 336h1v1h-1zM400 353h1v1h-1zM400 370h1v1h-1zM400 387h1v1h-1zM400 404h1v1h-1zM400 421h1v1h-1zM400 438h1v1h-1zM400 455h1v1h-1zM400 472h1v1h-1zM417 149h1v1h-1zM417 166h1v1h-1zM417 183h1v1h-1zM417 200h1v1h-1zM417 217h1v1h-1zM417 234h1v1h-1zM417 251h1v1h-1zM417 268h1v1h-1zM417 285h1v1h-1zM417 302h1v1h-1zM417 319h1v1h-1zM417 336h1v1h-1zM417 353h1v1h-1zM417 370h1v1h-1zM417 387h1v1h-1zM417 404h1v1h-1zM417 421h1v1h-1zM417 438h1v1h-1zM417 455h1v1h-1zM417 472h1v1h-1zM434 149h1v1h-1zM434 166h1v1h-1zM434 183h1v1h-1zM434 200h1v1h-1zM434 217h1v1h-1zM434 234h1v1h-1zM434 251h1v1h-1zM434 268h1v1h-1zM434 285h1v1h-1zM434 302h1v1h-1zM434 319h1v1h-1zM434 336h1v1h-1zM434 353h1v1h-1zM434 370h1v1h-1zM434 387h1v1h-1zM434 404h1v1h-1zM434 421h1v1h-1zM434 438h1v1h-1zM434 455h1v1h-1zM434 472h1v1h-1zM451 149h1v1h-1zM451 166h1v1h-1zM451 183h1v1h-1zM451 200h1v1h-1zM451 217h1v1h-1zM451 234h1v1h-1zM451 251h1v1h-1zM451 268h1v1h-1zM451 285h1v1h-1zM451 302h1v1h-1zM451 319h1v1h-1zM451 336h1v1h-1zM451 353h1v1h-1zM451 370h1v1h-1zM451 387h1v1h-1zM451 404h1v1h-1zM451 421h1v1h-1zM451 438h1v1h-1zM451 455h1v1h-1zM451 472h1v1h-1zM468 149h1v1h-1zM468 166h1v1h-1zM468 183h1v1h-1zM468 200h1v1h-1zM468 217h1v1h-1zM468 234h1v1h-1zM468 251h1v1h-1zM468 268h1v1h-1zM468 285h1v1h-1zM468 302h1v1h-1zM468 319h1v1h-1zM468 336h1v1h-1zM468 353h1v1h-1zM468 370h1v1h-1zM468 387h1v1h-1zM468 404h1v1h-1zM468 421h1v1h-1zM468 438h1v1h-1zM468 455h1v1h-1zM468 472h1v1h-1zM485 149h1v1h-1zM485 166h1v1h-1zM485 183h1v1h-1zM485 200h1v1h-1zM485 217h1v1h-1zM485 234h1v1h-1zM485 251h1v1h-1zM485 268h1v1h-1zM485 285h1v1h-1zM485 302h1v1h-1zM485 319h1v1h-1zM485 336h1v1h-1zM485 353h1v1h-1zM485 370h1v1h-1zM485 387h1v1h-1zM485 404h1v1h-1zM485 421h1v1h-1zM485 438h1v1h-1zM485 455h1v1h-1zM485 472h1v1h-1zM502 149h1v1h-1zM502 166h1v1h-1zM502 183h1v1h-1zM502 200h1v1h-1zM502 217h1v1h-1zM502 234h1v1h-1zM502 251h1v1h-1zM502 268h1v1h-1zM502 285h1v1h-1zM502 302h1v1h-1zM502 319h1v1h-1zM502 336h1v1h-1zM502 353h1v1h-1zM502 370h1v1h-1zM502 387h1v1h-1zM502 404h1v1h-1zM502 421h1v1h-1zM502 438h1v1h-1zM502 455h1v1h-1zM502 472h1v1h-1zM519 149h1v1h-1zM519 166h1v1h-1zM519 183h1v1h-1zM519 200h1v1h-1zM519 217h1v1h-1zM519 234h1v1h-1zM519 251h1v1h-1zM519 268h1v1h-1zM519 285h1v1h-1zM519 302h1v1h-1zM519 319h1v1h-1zM519 336h1v1h-1zM519 353h1v1h-1zM519 370h1v1h-1zM519 387h1v1h-1zM519 404h1v1h-1zM519 421h1v1h-1zM519 438h1v1h-1zM519 455h1v1h-1zM519 472h1v1h-1zM536 149h1v1h-1zM536 166h1v1h-1zM536 183h1v1h-1zM536 200h1v1h-1zM536 217h1v1h-1zM536 234h1v1h-1zM536 251h1v1h-1zM536 268h1v1h-1zM536 285h1v1h-1zM536 302h1v1h-1zM536 319h1v1h-1zM536 336h1v1h-1zM536 353h1v1h-1zM536 370h1v1h-1zM536 387h1v1h-1zM536 404h1v1h-1zM536 421h1v1h-1zM536 438h1v1h-1zM536 455h1v1h-1zM536 472h1v1h-1zM553 149h1v1h-1zM553 166h1v1h-1zM553 183h1v1h-1zM553 200h1v1h-1zM553 217h1v1h-1zM553 234h1v1h-1zM553 251h1v1h-1zM553 268h1v1h-1zM553 285h1v1h-1zM553 302h1v1h-1zM553 319h1v1h-1zM553 336h1v1h-1zM553 353h1v1h-1zM553 370h1v1h-1zM553 387h1v1h-1zM553 404h1v1h-1zM553 421h1v1h-1zM553 438h1v1h-1zM553 455h1v1h-1zM553 472h1v1h-1zM570 149h1v1h-1zM570 166h1v1h-1zM570 183h1v1h-1zM570 200h1v1h-1zM570 217h1v1h-1zM570 234h1v1h-1zM570 251h1v1h-1zM570 268h1v1h-1zM570 285h1v1h-1zM570 302h1v1h-1zM570 319h1v1h-1zM570 336h1v1h-1zM570 353h1v1h-1zM570 370h1v1h-1zM570 387h1v1h-1zM570 404h1v1h-1zM570 421h1v1h-1zM570 438h1v1h-1zM570 455h1v1h-1zM570 472h1v1h-1zM587 149h1v1h-1zM587 166h1v1h-1zM587 183h1v1h-1zM587 200h1v1h-1zM587 217h1v1h-1zM587 234h1v1h-1zM587 251h1v1h-1zM587 268h1v1h-1zM587 285h1v1h-1zM587 302h1v1h-1zM587 319h1v1h-1zM587 336h1v1h-1zM587 353h1v1h-1zM587 370h1v1h-1zM587 387h1v1h-1zM587 404h1v1h-1zM587 421h1v1h-1zM587 438h1v1h-1zM587 455h1v1h-1zM587 472h1v1h-1zM604 149h1v1h-1zM604 166h1v1h-1zM604 183h1v1h-1zM604 200h1v1h-1zM604 217h1v1h-1zM604 234h1v1h-1zM604 251h1v1h-1zM604 268h1v1h-1zM604 285h1v1h-1zM604 302h1v1h-1zM604 319h1v1h-1zM604 336h1v1h-1zM604 353h1v1h-1zM604 370h1v1h-1zM604 387h1v1h-1zM604 404h1v1h-1zM604 421h1v1h-1zM604 438h1v1h-1zM604 455h1v1h-1zM604 472h1v1h-1zM621 149h1v1h-1zM621 166h1v1h-1zM621 183h1v1h-1zM621 200h1v1h-1zM621 217h1v1h-1zM621 234h1v1h-1zM621 251h1v1h-1zM621 268h1v1h-1zM621 285h1v1h-1zM621 302h1v1h-1zM621 319h1v1h-1zM621 336h1v1h-1zM621 353h1v1h-1zM621 370h1v1h-1zM621 387h1v1h-1zM621 404h1v1h-1zM621 421h1v1h-1zM621 438h1v1h-1zM621 455h1v1h-1zM621 472h1v1h-1zM638 149h1v1h-1zM638 166h1v1h-1zM638 183h1v1h-1zM638 200h1v1h-1zM638 217h1v1h-1zM638 234h1v1h-1zM638 251h1v1h-1zM638 268h1v1h-1zM638 285h1v1h-1zM638 302h1v1h-1zM638 319h1v1h-1zM638 336h1v1h-1zM638 353h1v1h-1zM638 370h1v1h-1zM638 387h1v1h-1zM638 404h1v1h-1zM638 421h1v1h-1zM638 438h1v1h-1zM638 455h1v1h-1zM638 472h1v1h-1zM655 149h1v1h-1zM655 166h1v1h-1zM655 183h1v1h-1zM655 200h1v1h-1zM655 217h1v1h-1zM655 234h1v1h-1zM655 251h1v1h-1zM655 268h1v1h-1zM655 285h1v1h-1zM655 302h1v1h-1zM655 319h1v1h-1zM655 336h1v1h-1zM655 353h1v1h-1zM655 370h1v1h-1zM655 387h1v1h-1zM655 404h1v1h-1zM655 421h1v1h-1zM655 438h1v1h-1zM655 455h1v1h-1zM655 472h1v1h-1zM672 149h1v1h-1zM672 166h1v1h-1zM672 183h1v1h-1zM672 200h1v1h-1zM672 217h1v1h-1zM672 234h1v1h-1zM672 251h1v1h-1zM672 268h1v1h-1zM672 285h1v1h-1zM672 302h1v1h-1zM672 319h1v1h-1zM672 336h1v1h-1zM672 353h1v1h-1zM672 370h1v1h-1zM672 387h1v1h-1zM672 404h1v1h-1zM672 421h1v1h-1zM672 438h1v1h-1zM672 455h1v1h-1zM672 472h1v1h-1zM689 149h1v1h-1zM689 166h1v1h-1zM689 183h1v1h-1zM689 200h1v1h-1zM689 217h1v1h-1zM689 234h1v1h-1zM689 251h1v1h-1zM689 268h1v1h-1zM689 285h1v1h-1zM689 302h1v1h-1zM689 319h1v1h-1zM689 336h1v1h-1zM689 353h1v1h-1zM689 370h1v1h-1zM689 387h1v1h-1zM689 404h1v1h-1zM689 421h1v1h-1zM689 438h1v1h-1zM689 455h1v1h-1zM689 472h1v1h-1zM706 149h1v1h-1zM706 166h1v1h-1zM706 183h1v1h-1zM706 200h1v1h-1zM706 217h1v1h-1zM706 234h1v1h-1zM706 251h1v1h-1zM706 268h1v1h-1zM706 285h1v1h-1zM706 302h1v1h-1zM706 319h1v1h-1zM706 336h1v1h-1zM706 353h1v1h-1zM706 370h1v1h-1zM706 387h1v1h-1zM706 404h1v1h-1zM706 421h1v1h-1zM706 438h1v1h-1zM706 455h1v1h-1zM706 472h1v1h-1zM723 149h1v1h-1zM723 166h1v1h-1zM723 183h1v1h-1zM723 200h1v1h-1zM723 217h1v1h-1zM723 234h1v1h-1zM723 251h1v1h-1zM723 268h1v1h-1zM723 285h1v1h-1zM723 302h1v1h-1zM723 319h1v1h-1zM723 336h1v1h-1zM723 353h1v1h-1zM723 370h1v1h-1zM723 387h1v1h-1zM723 404h1v1h-1zM723 421h1v1h-1zM723 438h1v1h-1zM723 455h1v1h-1zM723 472h1v1h-1zM740 149h1v1h-1zM740 166h1v1h-1zM740 183h1v1h-1zM740 200h1v1h-1zM740 217h1v1h-1zM740 234h1v1h-1zM740 251h1v1h-1zM740 268h1v1h-1zM740 285h1v1h-1zM740 302h1v1h-1zM740 319h1v1h-1zM740 336h1v1h-1zM740 353h1v1h-1zM740 370h1v1h-1zM740 387h1v1h-1zM740 404h1v1h-1zM740 421h1v1h-1zM740 438h1v1h-1zM740 455h1v1h-1zM740 472h1v1h-1z" fill="#000"/><path d="M96.5 133 L96.5 487" stroke="#707070" stroke-width="1" stroke-dasharray="3 3"/><path d="M619.5 133 L619.5 487" stroke="#707070" stroke-width="1" stroke-dasharray="3 3"/><rect x="655" y="132" width="1" height="356" fill="#000"/><path d="M531 276.5 L531 313.7 L480.4 319.5 L445.9 296.5 L468.9 268.5 L520 258.7 M468.9 268.5 L457.5 211.6 L383.4 194.6 L378 144 L310 149.4 L304.4 206.4 L338 234.4 L383.4 194.6 M304.4 206.4 L236.2 228.5 L230.7 291.2 L190.7 296.5 L190.7 336.8 L236.5 342 L264.8 319.5 L230.7 291.2 M236.5 342 L247.5 404.7 L304.8 415.9 L320.8 477.5 L372.5 477.5 L394.7 410 L349.9 376.1 L304.8 415.9 M394.7 410 L473.9 393 L480.4 319.5 " stroke="#000" stroke-width="2.1" fill="none" stroke-linejoin="miter"/><rect x="520.5" y="243.5" width="44" height="33" fill="#fff" stroke="#8a8a8a" stroke-width="1"/><text x="523" y="264.5" font-size="19.5" fill="#000">CH</text><text x="551.5" y="270.5" font-size="17" fill="#000">2</text><rect x="741" y="133" width="17" height="355" fill="url(#gTrackV)"/><rect x="743.5" y="134.5" width="13" height="14" rx="2" fill="url(#gSbBtn)" stroke="#fff" stroke-width="0.8"/><path d="M746.5 143.5 L750 140 L753.5 143.5" stroke="#4d6185" stroke-width="1.8" fill="none"/><rect x="743.5" y="157.5" width="13" height="30" rx="2" fill="url(#gThumbV)" stroke="#f4f8ff" stroke-width="0.8"/><path d="M746 168.5h7M746 170.5h7M746 172.5h7M746 174.5h7M746 176.5h7" stroke="#8ea4d8" stroke-width="1"/><rect x="743.5" y="471.5" width="13" height="14" rx="2" fill="url(#gSbBtn)" stroke="#fff" stroke-width="0.8"/><path d="M746.5 476.5 L750 480 L753.5 476.5" stroke="#4d6185" stroke-width="1.8" fill="none"/><rect x="61" y="487" width="680" height="17" fill="url(#gTrackH)"/><rect x="741" y="487" width="17" height="17" fill="#eeeadb"/><rect x="742" y="486" width="15" height="1" fill="#a8b4cc"/><rect x="62.5" y="489.5" width="14" height="13" rx="2" fill="url(#gSbBtn)" stroke="#fff" stroke-width="0.8"/><path d="M71.5 492.5 L68 496 L71.5 499.5" stroke="#4d6185" stroke-width="1.8" fill="none"/><rect x="79.5" y="489.5" width="127" height="13" rx="2" fill="url(#gThumbH)" stroke="#fff" stroke-width="0.8"/><path d="M139.5 493v6M141.5 493v6M143.5 493v6M145.5 493v6" stroke="#8aa0d0" stroke-width="1"/><rect x="725.5" y="489.5" width="14" height="13" rx="2" fill="url(#gSbBtn)" stroke="#fff" stroke-width="0.8"/><path d="M730.5 492.5 L734 496 L730.5 499.5" stroke="#4d6185" stroke-width="1.8" fill="none"/><rect x="758" y="132" width="1" height="373" fill="#000"/><rect x="60" y="504" width="699" height="1" fill="#000"/><rect x="0" y="505" width="800" height="18" fill="url(#gRow)"/><rect x="0" y="523" width="800" height="1" fill="#bccbe6"/><rect x="2" y="507" width="13" height="14" fill="#fff"/><path d="M4 509 L13.5 518.5 M13.5 509 L4 518.5" stroke="#000" stroke-width="1.1"/><rect x="15" y="507" width="14" height="14" fill="#ff0000"/><rect x="15" y="507" width="1" height="14" fill="#000"/><rect x="29" y="507" width="14" height="14" fill="#800000"/><rect x="29" y="507" width="1" height="14" fill="#000"/><rect x="43" y="507" width="14" height="14" fill="#ffff00"/><rect x="43" y="507" width="1" height="14" fill="#000"/><rect x="57" y="507" width="14" height="14" fill="#808000"/><rect x="57" y="507" width="1" height="14" fill="#000"/><rect x="71" y="507" width="14" height="14" fill="#00ff00"/><rect x="71" y="507" width="1" height="14" fill="#000"/><rect x="85" y="507" width="14" height="14" fill="#008000"/><rect x="85" y="507" width="1" height="14" fill="#000"/><rect x="99" y="507" width="14" height="14" fill="#00ffff"/><rect x="99" y="507" width="1" height="14" fill="#000"/><rect x="113" y="507" width="14" height="14" fill="#008080"/><rect x="113" y="507" width="1" height="14" fill="#000"/><rect x="127" y="507" width="14" height="14" fill="#0000ff"/><rect x="127" y="507" width="1" height="14" fill="#000"/><rect x="141" y="507" width="14" height="14" fill="#000080"/><rect x="141" y="507" width="1" height="14" fill="#000"/><rect x="155" y="507" width="14" height="14" fill="#ff00ff"/><rect x="155" y="507" width="1" height="14" fill="#000"/><rect x="169" y="507" width="14" height="14" fill="#800080"/><rect x="169" y="507" width="1" height="14" fill="#000"/><rect x="183" y="507" width="14" height="14" fill="#ffffff"/><rect x="183" y="507" width="1" height="14" fill="#000"/><rect x="197" y="507" width="14" height="14" fill="#f7f7f7"/><rect x="197" y="507" width="1" height="14" fill="#000"/><rect x="211" y="507" width="14" height="14" fill="#ebebeb"/><rect x="211" y="507" width="1" height="14" fill="#000"/><rect x="225" y="507" width="14" height="14" fill="#dedede"/><rect x="225" y="507" width="1" height="14" fill="#000"/><rect x="239" y="507" width="14" height="14" fill="#d0d0d0"/><rect x="239" y="507" width="1" height="14" fill="#000"/><rect x="253" y="507" width="14" height="14" fill="#c2c2c2"/><rect x="253" y="507" width="1" height="14" fill="#000"/><rect x="267" y="507" width="14" height="14" fill="#b4b4b4"/><rect x="267" y="507" width="1" height="14" fill="#000"/><rect x="281" y="507" width="14" height="14" fill="#a6a6a6"/><rect x="281" y="507" width="1" height="14" fill="#000"/><rect x="295" y="507" width="14" height="14" fill="#989898"/><rect x="295" y="507" width="1" height="14" fill="#000"/><rect x="309" y="507" width="14" height="14" fill="#8a8a8a"/><rect x="309" y="507" width="1" height="14" fill="#000"/><rect x="323" y="507" width="14" height="14" fill="#7a7a7a"/><rect x="323" y="507" width="1" height="14" fill="#000"/><rect x="337" y="507" width="14" height="14" fill="#6a6a6a"/><rect x="337" y="507" width="1" height="14" fill="#000"/><rect x="351" y="507" width="14" height="14" fill="#5a5a5a"/><rect x="351" y="507" width="1" height="14" fill="#000"/><rect x="365" y="507" width="14" height="14" fill="#484848"/><rect x="365" y="507" width="1" height="14" fill="#000"/><rect x="379" y="507" width="14" height="14" fill="#343434"/><rect x="379" y="507" width="1" height="14" fill="#000"/><rect x="393" y="507" width="14" height="14" fill="#000000"/><rect x="393" y="507" width="1" height="14" fill="#000"/><text x="755" y="518" font-size="11" fill="#000" textLength="32.5" lengthAdjust="spacingAndGlyphs">More...</text><rect x="0" y="524" width="800" height="19" fill="url(#gRss)"/><rect x="0" y="543" width="800" height="1" fill="#bccbe6"/><text x="3" y="538" font-size="12.2" fill="#0a1a8a" textLength="456.5" lengthAdjust="spacingAndGlyphs">http://www.acdlabs.com/acdlabs-rss-feed.xml: <tspan fill="#000033">Dez 13 22:20 Cannot download RSS!</tspan></text><rect x="462" y="526" width="1" height="15" fill="#b0bcd6"/><svg x="466" y="524" width="260" height="19"><text x="0" y="14" font-size="12.2" fill="#0a1a8a" textLength="265" lengthAdjust="spacingAndGlyphs">http://www.acdlabs.com/acdlabs-rss-feed.xml: D</text></svg><text x="736.7" y="537" font-size="11" fill="#000" textLength="51.5" lengthAdjust="spacingAndGlyphs">Setup RSS</text><rect x="0" y="544" width="800" height="21" fill="url(#gRow)"/><circle cx="10.3" cy="554.3" r="3.4" fill="#8a8a8a"/><circle cx="20.3" cy="554.3" r="3.4" fill="#8a8a8a"/><circle cx="30.3" cy="554.3" r="3.4" fill="#8a8a8a"/><circle cx="9.3" cy="553.3" r="3.3" fill="#0a820a"/><circle cx="19.3" cy="553.3" r="3.3" fill="#7a7a0a"/><circle cx="29.3" cy="553.3" r="3.3" fill="#820a0a"/><text x="48" y="558" font-size="11" fill="#000" textLength="52" lengthAdjust="spacingAndGlyphs">I-Lab Login</text><text x="118" y="558" font-size="11" fill="#000" textLength="79" lengthAdjust="spacingAndGlyphs">NONAME01.SK2</text><text x="215" y="558" font-size="11" fill="#000" textLength="40" lengthAdjust="spacingAndGlyphs">Modified</text><text x="299" y="558" font-size="11" fill="#000" textLength="42" lengthAdjust="spacingAndGlyphs">Page 1/1</text><text x="378" y="558" font-size="11" fill="#000" textLength="61" lengthAdjust="spacingAndGlyphs">Fragments: 1</text><text x="502" y="558" font-size="11" fill="#000" textLength="70" lengthAdjust="spacingAndGlyphs">FW : 328.5744</text><text x="737" y="558" font-size="11" fill="#000" textLength="48" lengthAdjust="spacingAndGlyphs">Properties</text><path d="M276 550 L271 554.5 L276 559 Z" fill="#7a7a7a"/><path d="M281 549.5 L284.5 549.5 L284.5 558.5 L278.5 558.5 L278.5 552 Z" fill="#fafafa" stroke="#6a6a6a" stroke-width="1"/><path d="M360 549.5 L363.5 549.5 L363.5 558.5 L357.5 558.5 L357.5 552 Z" fill="#fafafa" stroke="#6a6a6a" stroke-width="1"/><path d="M365 550 L370 554.5 L365 559 Z" fill="#7a7a7a"/><text x="451" y="558" font-size="11" fill="#000">C</text><text x="460" y="560.5" font-size="10" fill="#000">24</text><text x="472" y="558" font-size="11" fill="#000">H</text><text x="482" y="560.5" font-size="10" fill="#000">40</text><path d="M711 552.5 L714 555.0 L711 557.5 M715 552.5 L718 555.0 L715 557.5" stroke="#000" stroke-width="1.3" fill="none"/><rect x="0" y="565" width="800" height="31" fill="url(#gTabs)"/><rect x="2.5" y="567.5" width="96" height="25" fill="#f7f1e0" stroke="#8d9db5"/><text x="7" y="585" font-size="13" fill="#0a0a48">1-ChemSketch</text><rect x="7" y="586" width="8" height="1" fill="#0a0a48"/><text x="104" y="585" font-size="13" fill="#0a0a48" textLength="70" lengthAdjust="spacingAndGlyphs">2-Database</text><rect x="104" y="586" width="8" height="1" fill="#0a0a48"/><text x="185" y="585" font-size="13" fill="#0a0a48" textLength="83" lengthAdjust="spacingAndGlyphs">3-ChemCoder</text><rect x="185" y="586" width="8" height="1" fill="#0a0a48"/><text x="786" y="586" font-size="11" fill="#0a0a40">...</text><rect x="0" y="596" width="800" height="4" fill="url(#gBot)"/></svg>
</body></html>
